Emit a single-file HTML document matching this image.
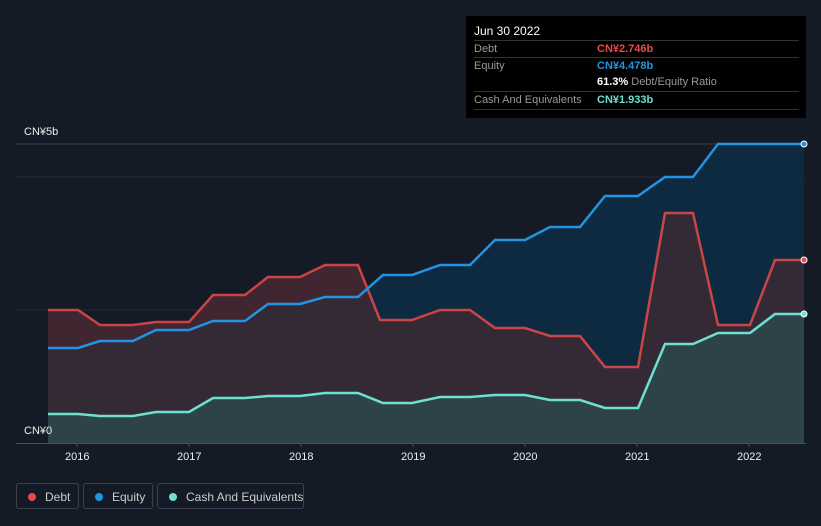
<!DOCTYPE html><html><head><meta charset="utf-8"><style>
body{margin:0;background:#151b26;font-family:"Liberation Sans",sans-serif;}
.wrap{position:relative;width:821px;height:526px;overflow:hidden;background:#151b26}
.tip{position:absolute;left:466px;top:16px;width:340px;height:102px;background:#000;}
.tip .h{position:absolute;left:8px;top:8px;color:#fff;font-size:12px}
.row{position:absolute;left:8px;width:325px;border-top:1px solid #333;height:17px;font-size:11px;color:#999;line-height:17px}
.row b{position:absolute;left:123px;font-weight:bold}
.lg{position:absolute;top:483px;height:26px;border:1px solid #3a414c;border-radius:3px;color:#ccc;font-size:12px;line-height:26px;box-sizing:border-box;white-space:nowrap}
.lg i{position:absolute;left:11px;top:9px;width:8px;height:8px;border-radius:50%}
.ax{position:absolute;color:#eee;font-size:11px}
</style></head><body><div class="wrap">
<svg width="821" height="526" style="position:absolute;left:0;top:0">
<line x1="16" y1="144" x2="806" y2="144" stroke="#3a404a"/>
<line x1="16" y1="177" x2="806" y2="177" stroke="#262c36"/>
<line x1="16" y1="310" x2="806" y2="310" stroke="#262c36"/>
<polygon fill="#0e2a40" points="48,443 48,348 78,348 100,341 133,341 156,330 189,330 213,321 245,321 268,304 300,304 325,297 358,297 383,275 412,275 440,265 470,265 495,240 525,240 550,227 580,227 605,196 638,196 665,177 693,177 718,144 804,144 804,443"/>
<polygon fill="#3b2a35" fill-opacity="0.85" points="48,443 48,310 78,310 100,325 133,325 156,322 189,322 213,295 245,295 268,277 300,277 325,265 358,265 380,320 412,320 440,310 470,310 495,328 525,328 550,336 580,336 605,367 638,367 665,213 693,213 718,325 750,325 775,260 804,260 804,443"/>
<polygon fill="#3f2630" points="48,348 48,310 78,310 100,325 133,325 156,322 189,322 213,295 245,295 268,277 300,277 325,265 358,265 370,297 325,297 300,304 268,304 245,321 213,321 189,330 156,330 133,341 100,341 78,348"/>
<polygon fill="#2e4347" points="48,443 48,414 78,414 100,416 133,416 156,412 189,412 213,398 245,398 268,396 300,396 325,393 358,393 383,403 412,403 440,397 470,397 495,395 525,395 550,400 580,400 605,408 638,408 665,344 693,344 718,333 750,333 775,314 804,314 804,443"/>
<polyline fill="none" stroke="#e84a4a" stroke-width="2.5" points="48,310 78,310 100,325 133,325 156,322 189,322 213,295 245,295 268,277 300,277 325,265 358,265 380,320 412,320 440,310 470,310 495,328 525,328 550,336 580,336 605,367 638,367 665,213 693,213 718,325 750,325 775,260 804,260" stroke-opacity="0.85"/>
<polyline fill="none" stroke="#2394e3" stroke-width="2.5" points="48,348 78,348 100,341 133,341 156,330 189,330 213,321 245,321 268,304 300,304 325,297 358,297 383,275 412,275 440,265 470,265 495,240 525,240 550,227 580,227 605,196 638,196 665,177 693,177 718,144 804,144"/>
<polyline fill="none" stroke="#6de0d0" stroke-width="2.5" points="48,414 78,414 100,416 133,416 156,412 189,412 213,398 245,398 268,396 300,396 325,393 358,393 383,403 412,403 440,397 470,397 495,395 525,395 550,400 580,400 605,408 638,408 665,344 693,344 718,333 750,333 775,314 804,314"/>
<circle cx="804" cy="144" r="3" fill="#2394e3" stroke="#fff"/>
<circle cx="804" cy="260" r="3" fill="#e84a4a" stroke="#fff"/>
<circle cx="804" cy="314" r="3" fill="#6de0d0" stroke="#fff"/>
<line x1="16" y1="443.5" x2="806" y2="443.5" stroke="#4a505a"/>
<g stroke="#4a505a"><line x1="77" y1="443" x2="77" y2="447"/><line x1="189" y1="443" x2="189" y2="447"/><line x1="301" y1="443" x2="301" y2="447"/><line x1="413" y1="443" x2="413" y2="447"/><line x1="525" y1="443" x2="525" y2="447"/><line x1="637" y1="443" x2="637" y2="447"/><line x1="749" y1="443" x2="749" y2="447"/></g>
</svg>
<div class="ax" style="left:24px;top:126px">CN¥5b</div>
<div class="ax" style="left:24px;top:425px">CN¥0</div>
<div class="ax" style="left:65px;top:451px">2016</div>
<div class="ax" style="left:177px;top:451px">2017</div>
<div class="ax" style="left:289px;top:451px">2018</div>
<div class="ax" style="left:401px;top:451px">2019</div>
<div class="ax" style="left:513px;top:451px">2020</div>
<div class="ax" style="left:625px;top:451px">2021</div>
<div class="ax" style="left:737px;top:451px">2022</div>
<div class="tip"><div class="h">Jun 30 2022</div>
<div class="row" style="top:24px">Debt<b style="color:#e84a4a">CN¥2.746b</b></div>
<div class="row" style="top:41px">Equity<b style="color:#2394e3">CN¥4.478b</b></div>
<div class="row" style="top:58px;border-top:none"><b style="color:#fff">61.3% <span style="color:#999;font-weight:normal">Debt/Equity Ratio</span></b></div>
<div class="row" style="top:75px">Cash And Equivalents<b style="color:#6de0d0">CN¥1.933b</b></div>
<div class="row" style="top:93px;height:0"></div>
</div>
<div class="lg" style="left:16px;width:63px;padding-left:28px"><i style="background:#e84a4a"></i>Debt</div>
<div class="lg" style="left:83px;width:70px;padding-left:28px"><i style="background:#2394e3"></i>Equity</div>
<div class="lg" style="left:157px;width:147px;padding-left:28px"><i style="background:#6de0d0"></i>Cash And Equivalents</div>
</div></body></html>
